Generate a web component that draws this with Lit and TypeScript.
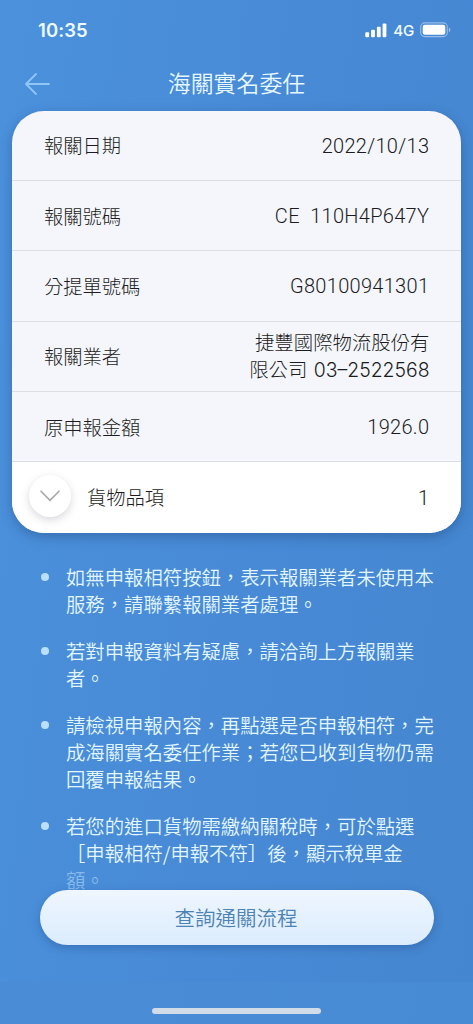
import { LitElement, html, css } from "lit";
import { customElement } from "lit/decorators.js";

interface Row {
  label: string;
  value: string[];
  kind?: string;
}

const rows: Row[] = [
  { label: "報關日期", value: ["2022/10/13"] },
  { label: "報關號碼", value: ["CE  110H4P647Y"] },
  { label: "分提單號碼", value: ["G80100941301"] },
  { label: "報關業者", value: ["捷豐國際物流股份有", "限公司 03–2522568"], kind: "company" },
  { label: "原申報金額", value: ["1926.0"] },
];

const notes: string[][] = [
  ["如無申報相符按鈕，表示報關業者未使用本", "服務，請聯繫報關業者處理。"],
  ["若對申報資料有疑慮，請洽詢上方報關業", "者。"],
  ["請檢視申報內容，再點選是否申報相符，完", "成海關實名委任作業；若您已收到貨物仍需", "回覆申報結果。"],
  ["若您的進口貨物需繳納關稅時，可於點選", "［申報相符/申報不符］後，顯示稅單金", "額。"],
];

@customElement("status-bar")
class StatusBar extends LitElement {
  static styles = css`
    :host {
      display: flex;
      justify-content: space-between;
      align-items: center;
      height: 60px;
      box-sizing: border-box;
      padding: 0 22px 0 38px;
      color: #effaff;
    }
    .time {
      font: 600 18.5px/24px Inter, sans-serif;
      letter-spacing: 0.1px;
      padding-bottom: 1px;
    }
    .right {
      display: flex;
      align-items: center;
    }
    .net {
      font: 450 15.2px/20px Inter, sans-serif;
      margin: 1px 6px 0 6px;
      letter-spacing: -0.3px;
    }
    svg {
      display: block;
    }
  `;
  render() {
    return html`
      <span class="time">10:35</span>
      <div class="right">
        <svg width="22" height="15" viewBox="0 0 22 15" fill="#fff">
          <rect x="0.3" y="9.3" width="3.8" height="5" rx="1" />
          <rect x="6.1" y="6.8" width="3.8" height="7.5" rx="1" />
          <rect x="11.9" y="3.7" width="3.8" height="10.6" rx="1" />
          <rect x="17.6" y="0.4" width="3.8" height="13.9" rx="1" />
        </svg>
        <span class="net">4G</span>
        <svg width="31" height="16" viewBox="0 0 31 16">
          <rect x="0.7" y="0.9" width="26.6" height="13.7" rx="4" fill="none" stroke="#fff" stroke-opacity=".45" stroke-width="1.1" />
          <rect x="2.7" y="2.8" width="22.6" height="9.9" rx="2.2" fill="#fff" />
          <path d="M28.9 5.4v4.8c.9-.4 1.5-1.3 1.5-2.4s-.6-2-1.5-2.4z" fill="#fff" fill-opacity=".5" />
        </svg>
      </div>
    `;
  }
}

@customElement("detail-card")
class DetailCard extends LitElement {
  static styles = css`
    :host {
      display: block;
      margin: 0 12px;
      border-radius: 32px;
      overflow: hidden;
      background: #f4f6fc;
      box-shadow: 0 4px 12px rgba(30, 60, 110, 0.38);
      color: #1c1c20;
      font: 300 19.3px/27px "Noto Sans CJK TC", sans-serif;
    }
    .row {
      display: flex;
      align-items: center;
      justify-content: space-between;
      height: 70.35px;
      box-sizing: border-box;
      padding: 1px 32px 0;
      border-bottom: 1px solid #dcdfe6;
    }
    .value {
      text-align: right;
      white-space: pre;
      font: 300 20px/27px Roboto, sans-serif;
      letter-spacing: 0.3px;
      margin-right: -0.3px;
      padding-top: 1px;
    }
    .line {
      display: block;
    }
    .company {
      font: 300 19.4px/27px Inter, "Noto Sans CJK TC", sans-serif;
      letter-spacing: 0;
      word-spacing: 1px;
      margin-right: -0.5px;
      padding: 1px 0 0;
    }
    .items {
      padding-left: 17px;
      background: #fff;
      border-bottom: 0;
    }
    .toggle {
      width: 42px;
      height: 42px;
      margin: -4px 16px 0 0;
      border-radius: 50%;
      background: #fff;
      box-shadow: 0 3px 9px rgba(60, 65, 90, 0.2);
      display: grid;
      place-items: center;
    }
    .name {
      flex: 1;
    }
  `;
  render() {
    return html`
      ${rows.map(
        (r) => html`<div class="row">
          <span>${r.label}</span>
          <span class="value ${r.kind ?? ""}">${r.value.map((l) => html`<span class="line">${l}</span>`)}</span>
        </div>`
      )}
      <div class="row items">
        <div class="toggle">
          <svg width="22" height="14" viewBox="0 0 22 14" fill="none" stroke="#a8a8aa" stroke-width="1.6" stroke-linecap="round" stroke-linejoin="round">
            <path d="M2 2.2l9 9.2 9-9.2" />
          </svg>
        </div>
        <span class="name">貨物品項</span>
        <span class="value">1</span>
      </div>
    `;
  }
}

@customElement("note-list")
class NoteList extends LitElement {
  static styles = css`
    :host {
      display: block;
      height: 357px;
      box-sizing: border-box;
      padding: 31px 0 0 40px;
      color: #e2f6ff;
      font: 350 19.37px/27px "Noto Sans CJK TC", sans-serif;
      text-spacing-trim: space-all;
    }
    .note {
      display: flex;
      margin-bottom: 20.1px;
    }
    .dot {
      width: 8px;
      height: 8px;
      border-radius: 50%;
      background: #b9e0ff;
      margin: 9px 17px 0 1px;
      flex: none;
    }
    .line {
      display: block;
      white-space: nowrap;
    }
    .note:last-child .line:last-child {
      color: rgba(200, 232, 255, 0.5);
    }
  `;
  render() {
    return notes.map(
      (n) => html`<div class="note">
        <i class="dot"></i>
        <div>${n.map((l) => html`<span class="line">${l}</span>`)}</div>
      </div>`
    );
  }
}

@customElement("app-root")
class AppRoot extends LitElement {
  static styles = css`
    :host {
      display: flex;
      flex-direction: column;
      height: 1024px;
      overflow: hidden;
      background: linear-gradient(97deg, #4b91dc 0%, #488ad6 50%, #4486cf 100%);
    }
    .header {
      display: grid;
      grid-template-columns: 60px 1fr 60px;
      align-items: center;
      height: 50.5px;
      flex: none;
    }
    .back {
      display: block;
      margin: -3px 0 0 24px;
    }
    .title {
      margin: 0;
      text-align: center;
      color: #e6f8ff;
      font: 350 22.9px/32px "Noto Sans CJK TC", sans-serif;
      padding-bottom: 7px;
    }
    .actions {
      display: flex;
      flex-direction: column;
      height: 92px;
      flex: none;
      padding: 0 39px 0 40px;
    }
    .button {
      height: 55px;
      border: 0;
      padding: 0 2px 0 0;
      border-radius: 28px;
      background: linear-gradient(#eff6ff, #dbecfd);
      box-shadow: 0 3px 8px rgba(30, 70, 130, 0.35);
      color: #4c83b4;
      font: 350 20.5px/28px "Noto Sans CJK TC", sans-serif;
    }
    .foot {
      flex: 1;
      display: flex;
      justify-content: center;
      align-items: flex-start;
      padding-top: 26px;
      background: linear-gradient(97deg, #4a8dd6, #488bd5);
    }
    .home {
      width: 169px;
      height: 6.5px;
      border-radius: 4px;
      background: #d2dbe8;
    }
  `;
  render() {
    return html`
      <status-bar></status-bar>
      <div class="header">
        <svg class="back" width="27" height="24" viewBox="0 0 27 24" fill="none" stroke="#8fc6f5" stroke-width="1.8" stroke-linecap="round" stroke-linejoin="round">
          <path d="M12 2L2 12l10 10M2 12h23" />
        </svg>
        <h1 class="title">海關實名委任</h1>
      </div>
      <detail-card></detail-card>
      <note-list></note-list>
      <div class="actions"><button class="button">查詢通關流程</button></div>
      <div class="foot"><div class="home"></div></div>
    `;
  }
}
